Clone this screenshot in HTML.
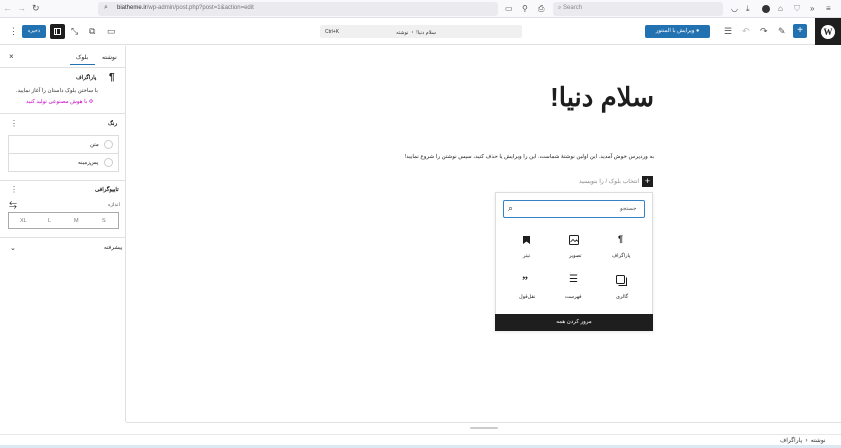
<!DOCTYPE html>
<html><head><meta charset="utf-8"><style>
*{box-sizing:border-box;margin:0;padding:0}
body{width:841px;height:448px;overflow:hidden;background:#fff;font-family:"Liberation Sans","Noto Sans CJK SC",sans-serif;position:relative;color:#1e1e1e}
.a{position:absolute}
.t{font-size:6px;direction:rtl;white-space:nowrap}
.ic{position:absolute;color:#555;font-size:9px;line-height:9px}
</style></head><body>
<!-- browser bar -->
<div class="a" style="left:0;top:0;width:841px;height:18px;background:#f9f9fb;border-bottom:1px solid #e0e0e6"></div>
<div class="ic" style="left:3px;top:4px;color:#aaa">←</div>
<div class="ic" style="left:17px;top:4px;color:#aaa">→</div>
<div class="ic" style="left:32px;top:4px">↻</div>
<div class="a" style="left:98px;top:2px;width:400px;height:14px;background:#ebebef;border-radius:3px"></div>
<div class="a" style="left:104px;top:4px;font-size:7px;color:#555">⌕</div>
<div class="a" style="left:117px;top:5px;font-size:6px;color:#777"><b style="color:#333;font-weight:normal">biatheme.ir</b>/wp-admin/post.php?post=1&amp;action=edit</div>
<div class="ic" style="left:505px;top:4px;font-size:8px">▭</div>
<div class="ic" style="left:522px;top:4px;font-size:8px">⚲</div>
<div class="ic" style="left:538px;top:4px;font-size:8px">⎙</div>
<div class="a" style="left:553px;top:2px;width:170px;height:14px;background:#ebebef;border-radius:3px"></div>
<div class="a" style="left:558px;top:5px;font-size:6px;color:#888">⌕ Search</div>
<div class="ic" style="left:731px;top:4px;font-size:8px">◡</div>
<div class="ic" style="left:746px;top:4px;font-size:8px">⤓</div>
<div class="a" style="left:762px;top:5px;width:8px;height:8px;border-radius:50%;background:#333"></div>
<div class="ic" style="left:778px;top:4px;font-size:8px">⌂</div>
<div class="ic" style="left:794px;top:4px;font-size:8px;color:#99a">⛉</div>
<div class="ic" style="left:810px;top:4px;font-size:8px">»</div>
<div class="ic" style="left:826px;top:4px;font-size:8px">≡</div>
<!-- editor toolbar -->
<div class="a" style="left:0;top:18px;width:841px;height:27px;background:#fff;border-bottom:1px solid #e0e0e0"></div>
<div class="a" style="left:9px;top:26px;font-size:9px;color:#555">⋮</div>
<div class="a" style="left:22px;top:25px;width:24px;height:13px;background:#2271b1;border-radius:2px;color:#fff;font-size:5px;text-align:center;line-height:13px">ذخیره</div>
<div class="a" style="left:50px;top:24px;width:15px;height:15px;background:#1e1e1e;border-radius:2px"><div class="a" style="left:4px;top:4px;width:7px;height:7px;border:1px solid #fff"></div><div class="a" style="left:6px;top:4px;width:1px;height:7px;background:#fff"></div></div>
<div class="ic" style="left:71px;top:27px">⤡</div>
<div class="ic" style="left:89px;top:27px">⧉</div>
<div class="ic" style="left:107px;top:27px">▭</div>
<div class="a" style="left:320px;top:25px;width:202px;height:13px;background:#f0f0f0;border-radius:2px"></div>
<div class="a" style="left:325px;top:29px;font-size:5px;color:#333">Ctrl+K</div>
<div class="a t" style="left:390px;top:29px;font-size:5px;width:52px;text-align:center;color:#333">سلام دنیا! ・ نوشته</div>
<div class="a" style="left:645px;top:25px;width:65px;height:13px;background:#2271b1;border-radius:2px;color:#fff;font-size:5.5px;line-height:13px;text-align:center;direction:rtl">● ویرایش با المنتور</div>
<div class="ic" style="left:724px;top:27px">☰</div>
<div class="ic" style="left:742px;top:27px;color:#bbb">↶</div>
<div class="ic" style="left:760px;top:27px">↷</div>
<div class="ic" style="left:778px;top:27px">✎</div>
<div class="a" style="left:793px;top:24px;width:14px;height:14px;background:#2271b1;border-radius:2px;color:#fff;font-size:10px;line-height:14px;text-align:center">+</div>
<div class="a" style="left:815px;top:18px;width:26px;height:27px;background:#1e1e1e"><div class="a" style="left:6px;top:7px;width:14px;height:14px;border-radius:50%;background:#fff;color:#1e1e1e;font:bold 9px 'Liberation Serif',serif;text-align:center;line-height:14px">W</div></div>
<!-- sidebar -->
<div class="a" style="left:0;top:46px;width:126px;height:376px;border-right:1px solid #e0e0e0"></div>
<div class="a" style="left:9px;top:52px;font-size:8px;color:#333">×</div>
<div class="a t" style="left:76px;top:54px">بلوک</div>
<div class="a" style="left:70px;top:64px;width:25px;height:1px;background:#2271b1"></div>
<div class="a t" style="left:102px;top:54px">نوشته</div>
<div class="a" style="left:0;top:67px;width:126px;height:1px;background:#e0e0e0"></div>
<div class="a" style="left:109px;top:72px;font-size:10px;font-weight:bold">¶</div>
<div class="a t" style="left:76px;top:75px;font-weight:bold;font-size:5.5px">پاراگراف</div>
<div class="a t" style="left:16px;top:88px;font-size:5.5px;color:#333">با ساختن بلوک داستان را آغاز نمایید.</div>
<div class="a t" style="left:26px;top:99px;font-size:5.5px;color:#c0c">✣ با هوش مصنوعی تولید کنید</div>
<div class="a" style="left:0;top:113px;width:126px;height:1px;background:#e0e0e0"></div>
<div class="a" style="left:10px;top:119px;font-size:8px;color:#555">⋮</div>
<div class="a t" style="left:108px;top:121px;font-weight:bold;font-size:5.5px">رنگ</div>
<div class="a" style="left:8px;top:135px;width:111px;height:37px;border:1px solid #ddd"></div>
<div class="a" style="left:8px;top:153px;width:111px;height:1px;background:#ddd"></div>
<div class="a" style="left:104px;top:140px;width:9px;height:9px;border:1px solid #ccc;border-radius:50%"></div>
<div class="a t" style="left:90px;top:142px;font-size:5.5px">متن</div>
<div class="a" style="left:104px;top:158px;width:9px;height:9px;border:1px solid #ccc;border-radius:50%"></div>
<div class="a t" style="left:78px;top:160px;font-size:5.5px">پس‌زمینه</div>
<div class="a" style="left:0;top:180px;width:126px;height:1px;background:#e0e0e0"></div>
<div class="a" style="left:10px;top:185px;font-size:8px;color:#555">⋮</div>
<div class="a t" style="left:95px;top:187px;font-weight:bold;font-size:5.5px">تایپوگرافی</div>
<div class="a" style="left:9px;top:200px;font-size:8px">⇆</div>
<div class="a t" style="left:108px;top:202px;font-size:5px;color:#555">اندازه</div>
<div class="a" style="left:8px;top:212px;width:111px;height:17px;border:1px solid #aaa"></div>
<div class="a" style="left:20px;top:218px;font-size:5.5px;color:#777">XL</div>
<div class="a" style="left:48px;top:218px;font-size:5.5px;color:#777">L</div>
<div class="a" style="left:74px;top:218px;font-size:5.5px;color:#777">M</div>
<div class="a" style="left:102px;top:218px;font-size:5.5px;color:#777">S</div>
<div class="a" style="left:0;top:237px;width:126px;height:1px;background:#e0e0e0"></div>
<div class="a" style="left:10px;top:244px;font-size:7px;color:#333">⌄</div>
<div class="a t" style="left:104px;top:245px;font-size:5.5px">پیشرفته</div>
<!-- canvas -->
<div class="a" style="left:548px;top:80px;font-size:26px;font-weight:bold;direction:rtl;white-space:nowrap;line-height:34px;width:106px;text-align:right">سلام دنیا!</div>
<div class="a t" style="left:399px;top:154px;font-size:5.6px;width:255px;text-align:right">به وردپرس خوش آمدید. این اولین نوشتهٔ شماست. این را ویرایش یا حذف کنید، سپس نوشتن را شروع نمایید!</div>
<div class="a" style="left:642px;top:176px;width:11px;height:11px;background:#1e1e1e;color:#fff;font-size:9px;line-height:11px;text-align:center">+</div>
<div class="a t" style="left:579px;top:178px;font-size:6px;color:#888">انتخاب بلوک / را بنویسید</div>
<div class="a" style="left:495px;top:192px;width:158px;height:139px;border:1px solid #ddd;background:#fff;box-shadow:0 1px 3px rgba(0,0,0,.1)"></div>
<div class="a" style="left:503px;top:200px;width:142px;height:18px;border:1px solid #3582c4;border-radius:2px"></div>
<div class="a" style="left:508px;top:203px;font-size:9px;color:#333">⌕</div>
<div class="a t" style="left:620px;top:206px;font-size:5.5px;color:#555">جستجو</div>
<svg class="a" style="left:523px;top:236px" width="7" height="8" viewBox="0 0 7 8"><path d="M0 0H7V8L3.5 5.5L0 8Z" fill="#1e1e1e"/></svg>
<svg class="a" style="left:569px;top:235px" width="10" height="10" viewBox="0 0 10 10"><rect x=".5" y=".5" width="9" height="9" rx="1" fill="none" stroke="#1e1e1e"/><path d="M1.5 7L4 4.5L6 6.5L7.5 5L9 6.5" fill="none" stroke="#1e1e1e" stroke-width=".8"/></svg>
<div class="a" style="left:618px;top:234px;font-size:9px;font-weight:bold">¶</div>
<div class="a t" style="left:523px;top:253px;font-size:5px">تیتر</div>
<div class="a t" style="left:569px;top:253px;font-size:5px">تصویر</div>
<div class="a t" style="left:612px;top:253px;font-size:5px">پاراگراف</div>
<div class="a" style="left:522px;top:274px;font-size:12px;font-weight:bold;font-family:'Liberation Serif',serif;line-height:12px">”</div>
<div class="a" style="left:569px;top:275px;font-size:10px;line-height:10px">☰</div>
<svg class="a" style="left:616px;top:275px" width="11" height="11" viewBox="0 0 11 11"><rect x=".5" y=".5" width="8" height="8" rx="1" fill="none" stroke="#1e1e1e"/><path d="M2.5 10.5H10.5V2.5" fill="none" stroke="#1e1e1e"/></svg>
<div class="a t" style="left:519px;top:294px;font-size:5px">نقل‌قول</div>
<div class="a t" style="left:565px;top:294px;font-size:5px">فهرست</div>
<div class="a t" style="left:616px;top:294px;font-size:5px">گالری</div>
<div class="a" style="left:495px;top:314px;width:158px;height:17px;background:#1e1e1e;color:#fff;font-size:5.5px;text-align:center;line-height:17px;direction:rtl">مرور کردن همه</div>
<!-- footer -->
<div class="a" style="left:126px;top:422px;width:715px;height:1px;background:#e0e0e0"></div>
<div class="a" style="left:470px;top:427px;width:28px;height:2px;background:#ccc;border-radius:1px"></div>
<div class="a" style="left:0;top:434px;width:841px;height:1px;background:#e8e8e8"></div>
<div class="a t" style="left:780px;top:437px;font-size:6px;color:#333">نوشته &nbsp;‹ &nbsp;پاراگراف</div>
<div class="a" style="left:0;top:445px;width:841px;height:3px;background:#dce8f2"></div>
</body></html>
